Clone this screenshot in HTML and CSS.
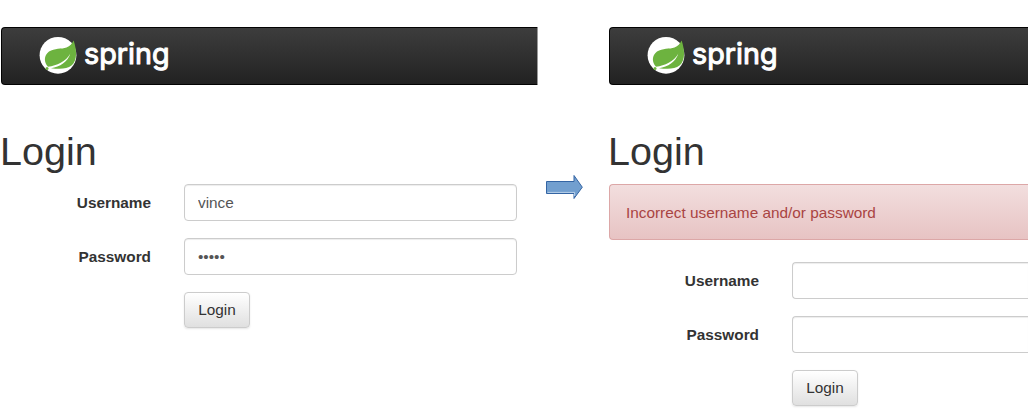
FILE: index.html
```
<!DOCTYPE html>
<html lang="en">
<head>
<meta charset="utf-8">
<title>Login</title>
<link rel="stylesheet" href="styles.css">
</head>
<body>
<main class="flow">
  <section class="screen screen-before">
    <header class="navbar">
      <svg class="logo" viewBox="0 0 134 44">
        <circle cx="19" cy="21.3" r="18.4" fill="#fff"/>
        <path d="M34.6 6.4C33 9.6 31 12 27.5 13.4C22.5 15.2 15.5 13.8 10 17.6C4.6 21.6 4.8 28.6 9 32.8C18 31.8 26.5 27.8 31.4 19.6C28.6 28.4 21 32.8 12 34.2C19 35 27.4 35.8 32.8 31.3C38.6 26 37.8 16 34.6 6.4Z" fill="#6db33f"/>
        <circle cx="8" cy="34.4" r="1.5" fill="#6db33f"/>
        <text class="wordmark" x="45" y="30.3" textLength="85.5" lengthAdjust="spacingAndGlyphs">spring</text>
      </svg>
    </header>
    <h1 class="title">Login</h1>
    <form class="form">
      <label class="label" for="user-a">Username</label>
      <input class="input" id="user-a" type="text" value="vince">
      <label class="label" for="pass-a">Password</label>
      <input class="input" id="pass-a" type="password" value="vince">
      <button class="button" type="button">Login</button>
    </form>
  </section>
  <div class="transition">
    <svg class="arrow" viewBox="0 0 38 26">
      <path d="M.5 7.5H28V1.5L36.3 13.2L28 24.5V19.5H.5Z" fill="#729fcf" stroke="#3465a4"/>
      <path d="M1.5 18.4H28.6V22" fill="none" stroke="#b9d0e9"/>
    </svg>
  </div>
  <section class="screen screen-after">
    <header class="navbar">
      <svg class="logo" viewBox="0 0 134 44">
        <circle cx="19" cy="21.3" r="18.4" fill="#fff"/>
        <path d="M34.6 6.4C33 9.6 31 12 27.5 13.4C22.5 15.2 15.5 13.8 10 17.6C4.6 21.6 4.8 28.6 9 32.8C18 31.8 26.5 27.8 31.4 19.6C28.6 28.4 21 32.8 12 34.2C19 35 27.4 35.8 32.8 31.3C38.6 26 37.8 16 34.6 6.4Z" fill="#6db33f"/>
        <circle cx="8" cy="34.4" r="1.5" fill="#6db33f"/>
        <text class="wordmark" x="45" y="30.3" textLength="85.5" lengthAdjust="spacingAndGlyphs">spring</text>
      </svg>
    </header>
    <h1 class="title">Login</h1>
    <div class="alert">Incorrect username and/or password</div>
    <form class="form">
      <label class="label" for="user-b">Username</label>
      <input class="input" id="user-b" type="text">
      <label class="label" for="pass-b">Password</label>
      <input class="input" id="pass-b" type="password">
      <button class="button" type="button">Login</button>
    </form>
  </section>
</main>
</body>
</html>
```
FILE: styles.css
```
* { box-sizing: border-box; }
body {
  margin: 0;
  height: 420px;
  overflow: hidden;
  background: #fff;
  color: #333;
  font: 15.35px/20px "Liberation Sans", Arial, sans-serif;
}
.flow {
  display: grid;
  grid-template-columns: 536.5px 71.5px minmax(0, 1fr);
  padding: 27px 0 0 1px;
}
.screen { min-width: 0; height: 393px; }
.navbar {
  height: 58px;
  padding: 6px 0 0 37px;
  border: 1px solid #030303;
  border-right: 0;
  border-radius: 4px 0 0 4px;
  background: linear-gradient(#3d3d3d, #222);
}
.screen-before .navbar { border-right: 1px solid #999; }
.logo { display: block; width: 134px; height: 44px; overflow: visible; }
.wordmark {
  font: 400 29.5px Inter, sans-serif;
  fill: #fff;
  stroke: #fff;
  stroke-width: 1.1px;
  stroke-linejoin: round;
}
.title {
  margin: 46px 0 12px -1px;
  font-size: 39.5px;
  line-height: 41px;
  font-weight: 400;
}
.form {
  display: grid;
  grid-template-columns: 150px 333px;
  column-gap: 33px;
  row-gap: 17px;
}
.screen-after .form { grid-template-columns: 150px minmax(0, 1fr); }
.screen-after .input {
  border-right: 0;
  border-radius: 4px 0 0 4px;
}
.label {
  padding-top: 9px;
  text-align: right;
  font-weight: 700;
}
.input {
  width: 100%;
  height: 37px;
  padding: 0 13px;
  border: 1px solid #ccc;
  border-radius: 4px;
  background: #fff;
  box-shadow: inset 0 1px 1px rgba(0, 0, 0, .075);
  color: #555;
  font: inherit;
}
.button {
  grid-column: 2;
  justify-self: start;
  width: 66px;
  height: 36px;
  padding: 0;
  border: 1px solid #ccc;
  border-radius: 4px;
  background: linear-gradient(#fff, #e0e0e0);
  box-shadow: 0 1px 2px rgba(0, 0, 0, .1);
  color: #333;
  font: inherit;
}
.transition { padding: 147px 0 0 8.5px; }
.arrow { display: block; width: 38px; height: 26px; }
.alert {
  height: 56px;
  margin-bottom: 22px;
  padding: 18px 16px;
  border: 1px solid #dca7a7;
  border-right: 0;
  border-radius: 4px 0 0 4px;
  background: linear-gradient(#f2dede, #e7c3c3);
  color: #a94442;
}
```
